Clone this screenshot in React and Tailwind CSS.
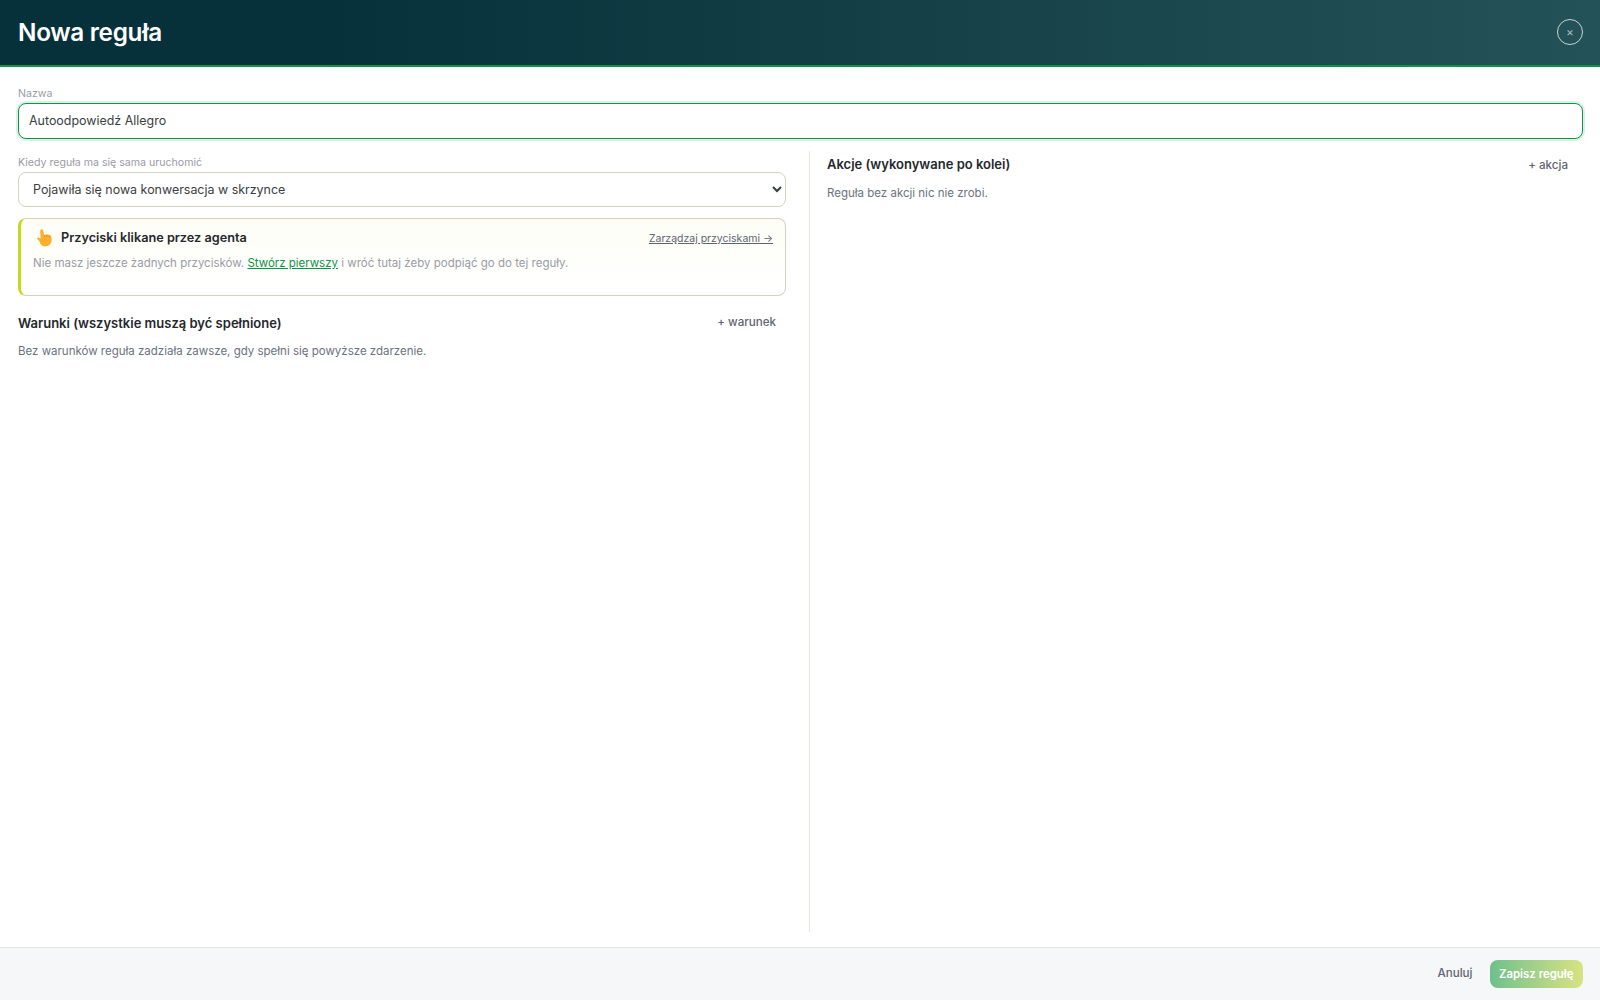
import React from "react"

const font = { fontFamily: "Inter" }

function HandIcon() {
  return (
    <svg width="18" height="20" viewBox="0 0 18 20" className="shrink-0">
      <path
        d="M5 1.6c.9-.7 2 0 2.2 1l.9 4.3c1.6-.4 5-.6 6.3.6 1 .9 1.4 2.5 1.3 4.3-.1 2.600-1.300 5.600-4.700 6.300-2.800.6-5 .1-6.300-1.900-.8-1.200-.9-2.400-1.700-3.400-.7-.9-2.200-2-1.800-2.900.4-.8 1.800-.5 3.400.7L4.200 3.300c-.1-.7.2-1.300.8-1.700z"
        fill="#fbb02d"
      />
      <path d="M8.200 7.200l.4 2M10.800 7l.3 2M13.200 7.500l.1 1.800" stroke="#d98a12" strokeWidth="0.8" fill="none" />
    </svg>
  )
}

export default function App() {
  return (
    <div className="flex h-screen flex-col bg-white font-['Inter',sans-serif] text-[#1f2328]" style={font}>
      <header className="flex h-[67px] shrink-0 items-center justify-between border-b-2 border-[#0d9448] bg-gradient-to-r from-[#07313a] from-[20%] to-[#245259] pl-[18px] pr-[17px]">
        <h1 className="text-[24.300px] font-semibold tracking-[-0.3px] text-white">Nowa reguła</h1>
        <button className="mb-[1px] flex h-[26px] w-[26px] items-center justify-center rounded-full border border-[#c9d4d4] text-[12px] leading-none text-[#a9b8ba]">
          ×
        </button>
      </header>

      <main className="flex min-h-0 flex-1 flex-col pl-[18px] pr-[17px] pt-[19px] pb-[15px]">
        <label className="mb-[1px] block text-[10.600px] leading-4 text-[#9a9ca6]">Nazwa</label>
        <div className="flex h-[36px] items-center rounded-lg border border-[#0d9448] bg-white px-[10px] pt-[1px] text-[12.450px] text-[#3a3d42] shadow-[0_0_0_2px_#d9f0e4]">
          Autoodpowiedź Allegro
        </div>

        <div className="mt-[12px] flex min-h-0 flex-1">
          <section className="w-[768px] shrink-0">
            <label className="mt-[4px] mb-[1px] block text-[10.600px] leading-4 text-[#9a9ca6]">
              Kiedy reguła ma się sama uruchomić
            </label>
            <select className="h-[35px] w-full rounded-lg border border-[#d3d3c0] bg-white pl-[10px] pr-1 text-[12.450px] text-[#3a3d42]">
              <option>Pojawiła się nowa konwersacja w skrzynce</option>
            </select>

            <div className="mt-[11px] h-[78px] rounded-lg border border-l-[3px] border-[#d3d3c0] border-l-[#c5d81e] bg-gradient-to-b from-[#fdfdf6] to-white pl-[12px] pr-[12px] pt-[9px]">
              <div className="flex items-center justify-between">
                <div className="flex items-center gap-[7px] pl-[3px]">
                  <HandIcon />
                  <span className="text-[12.700px] font-semibold text-[#25282c]">Przyciski klikane przez agenta</span>
                </div>
                <a className="block pt-[2px] text-[10.500px] text-[#5f6570] underline">Zarządzaj przyciskami →</a>
              </div>
              <p className="mt-[5px] text-[11.500px] leading-5 text-[#9a9ca6]">
                Nie masz jeszcze żadnych przycisków. <a className="text-[#0d9448] underline">Stwórz pierwszy</a> i wróć tutaj żeby podpiąć go do tej reguły.
              </p>
            </div>

            <div className="mt-[17px] flex items-center justify-between pr-[10px]">
              <h2 className="pt-[1px] text-[13px] font-semibold text-[#25282c]">Warunki (wszystkie muszą być spełnione)</h2>
              <button className="mb-[2px] text-[11.600px] font-medium text-[#5f6570]">+ warunek</button>
            </div>
            <p className="mt-[7px] text-[11.500px] leading-5 text-[#6b7280]">
              Bez warunków reguła zadziała zawsze, gdy spełni się powyższe zdarzenie.
            </p>
          </section>

          <div className="ml-[23px] w-px shrink-0 bg-[#e6e6da]" />

          <section className="min-w-0 flex-1 pl-[17px] pr-[15px] pt-[4px]">
            <div className="flex items-center justify-between">
              <h2 className="text-[13px] font-semibold text-[#25282c]">Akcje (wykonywane po kolei)</h2>
              <button className="pt-[2px] text-[11.600px] font-medium text-[#5f6570]">+ akcja</button>
            </div>
            <p className="mt-[8px] text-[11.500px] leading-5 text-[#6b7280]">Reguła bez akcji nic nie zrobi.</p>
          </section>
        </div>
      </main>

      <footer className="flex h-[53px] shrink-0 items-center justify-end gap-[17px] border-t border-[#e6e6da] bg-[#f6f7f9] pr-[17px]">
        <button className="text-[11.600px] font-medium text-[#5f6570]">Anuluj</button>
        <button className="flex h-[28px] items-center rounded-lg bg-gradient-to-r from-[#6cc08c] to-[#d8e282] px-[9.500px] pt-[1px] text-[11.400px] font-semibold text-white">
          Zapisz regułę
        </button>
      </footer>
    </div>
  )
}
